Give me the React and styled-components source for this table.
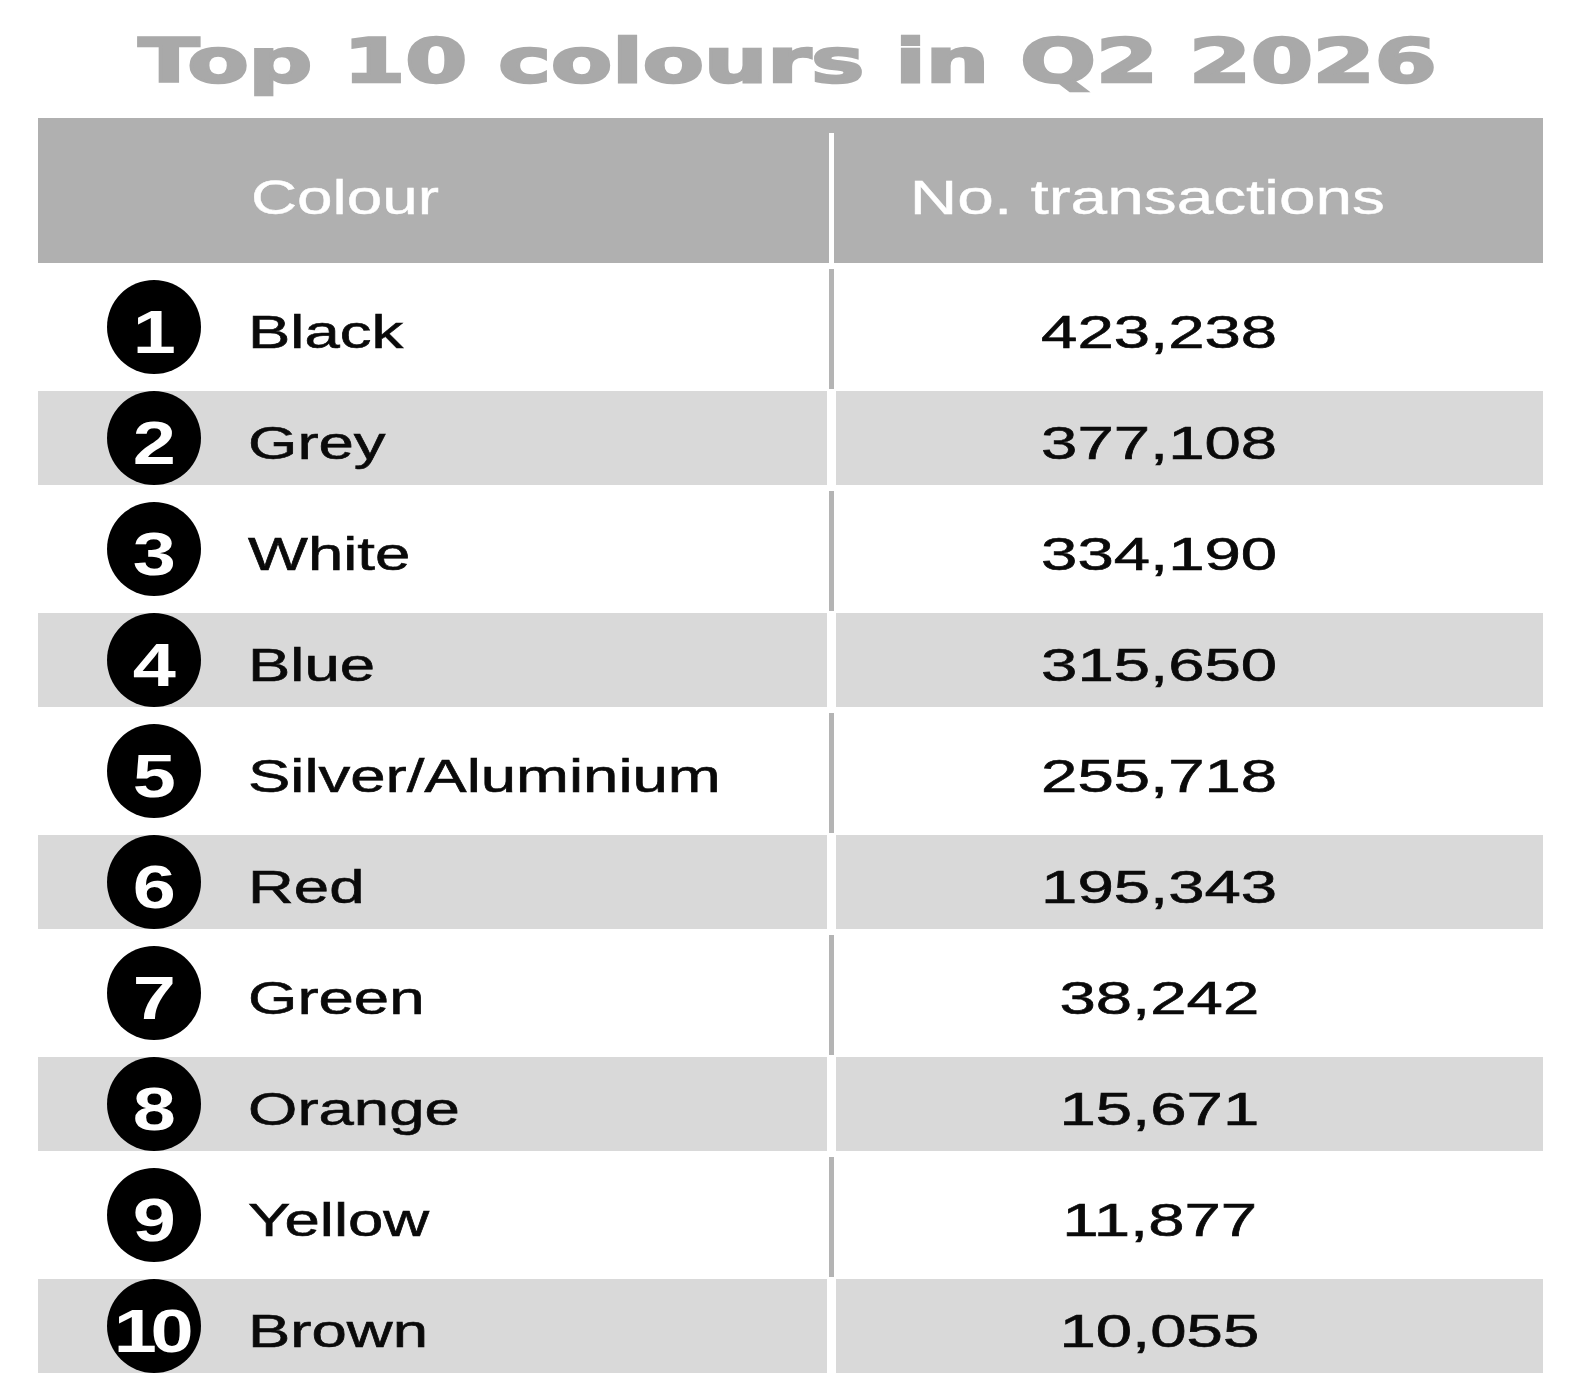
import styled, { createGlobalStyle } from "styled-components";

const GlobalStyle = createGlobalStyle`
  html, body {
    margin: 0;
    padding: 0;
    background: #fff;
  }
`;

const Page = styled.div`
  width: 1575px;
  padding-top: 29px;
  font-family: "Liberation Sans", Arial, sans-serif;
  color: #0a0a0a;
`;

const TitleBar = styled.div`
  display: flex;
  justify-content: center;
  height: 63px;
  margin-bottom: 26px;
`;

const Title = styled.h1`
  margin: 0;
  display: inline-block;
  font: 700 61px/63px "DejaVu Sans", sans-serif;
  color: #a9a9a9;
  -webkit-text-stroke: 2.5px #a9a9a9;
  white-space: nowrap;
  transform: scaleX(1.46);
  transform-origin: center;
`;

const Table = styled.div`
  margin-left: 38px;
  width: 1505px;
`;

const HeaderRow = styled.div`
  display: grid;
  grid-template-columns: 789px 9px 707px;
  height: 145px;
  background: #b0b0b0;
`;

const HeaderCell = styled.div`
  display: flex;
  align-items: center;
  justify-content: ${(p) => (p.$center ? "center" : "flex-start")};
  padding: 14px ${(p) => (p.$center ? "85px" : "0")} 0 ${(p) => (p.$center ? "0" : "213px")};
  font-size: 48px;
  color: #fff;
  -webkit-text-stroke: 0.4px #fff;
`;

const Row = styled.div`
  display: grid;
  grid-template-columns: 789px 9px 707px;
  height: ${(p) => (p.$shaded ? 94 : 128)}px;
`;

const NameCell = styled.div`
  display: flex;
  align-items: center;
  gap: 47px;
  padding-left: 69px;
  background: ${(p) => (p.$shaded ? "#d9d9d9" : "transparent")};
`;

const ValueCell = styled.div`
  display: flex;
  align-items: center;
  justify-content: center;
  padding: 9px 60px 0 0;
  background: ${(p) => (p.$shaded ? "#d9d9d9" : "transparent")};
`;

const Divider = styled.div`
  display: flex;
  justify-content: center;
`;

const DividerLine = styled.div`
  width: 5px;
  margin: ${(p) => p.$margin};
  background: ${(p) => p.$color};
`;

const Badge = styled.div`
  flex: none;
  width: 94px;
  height: 94px;
  border-radius: 50%;
  background: #000;
  display: flex;
  align-items: center;
  justify-content: center;
`;

const BadgeNumber = styled.span`
  display: inline-block;
  padding-top: 9px;
  margin-left: ${(p) => (p.$tight ? "-8px" : "0")};
  font: 700 62px/1 "Liberation Sans", Arial, sans-serif;
  color: #fff;
  letter-spacing: ${(p) => (p.$tight ? "-5px" : "0")};
  transform: scaleX(1.25);
  transform-origin: center;
`;

const Wide = styled.span`
  display: inline-block;
  white-space: nowrap;
  transform: scaleX(${(p) => p.$sx});
  transform-origin: ${(p) => p.$origin || "left center"};
`;

const Name = styled(Wide)`
  padding-top: 9px;
  font-size: 46px;
  line-height: 1;
  -webkit-text-stroke: 0.6px #0a0a0a;
`;

const Value = styled(Wide)`
  font-size: 46px;
  line-height: 1;
  -webkit-text-stroke: 0.6px #0a0a0a;
`;

const colours = [
  { name: "Black", count: "423,238" },
  { name: "Grey", count: "377,108" },
  { name: "White", count: "334,190" },
  { name: "Blue", count: "315,650" },
  { name: "Silver/Aluminium", count: "255,718" },
  { name: "Red", count: "195,343" },
  { name: "Green", count: "38,242" },
  { name: "Orange", count: "15,671" },
  { name: "Yellow", count: "11,877" },
  { name: "Brown", count: "10,055" },
];

export default function App() {
  return (
    <Page>
      <GlobalStyle />
      <TitleBar>
        <Title>Top 10 colours in Q2 2026</Title>
      </TitleBar>
      <Table>
        <HeaderRow>
          <HeaderCell>
            <Wide $sx={1.33}>Colour</Wide>
          </HeaderCell>
          <Divider>
            <DividerLine $color="#fff" $margin="15px 0 0" />
          </Divider>
          <HeaderCell $center>
            <Wide $sx={1.37} $origin="center">No. transactions</Wide>
          </HeaderCell>
        </HeaderRow>
        {colours.map((c, i) => {
          const shaded = i % 2 === 1;
          const rank = i + 1;
          return (
            <Row key={c.name} $shaded={shaded}>
              <NameCell $shaded={shaded}>
                <Badge>
                  <BadgeNumber $tight={rank === 10}>{rank}</BadgeNumber>
                </Badge>
                <Name $sx={1.38}>{c.name}</Name>
              </NameCell>
              <Divider>
                {!shaded && <DividerLine $color="#b4b4b4" $margin="6px 0 2px" />}
              </Divider>
              <ValueCell $shaded={shaded}>
                <Value $sx={1.42} $origin="center">{c.count}</Value>
              </ValueCell>
            </Row>
          );
        })}
      </Table>
    </Page>
  );
}
